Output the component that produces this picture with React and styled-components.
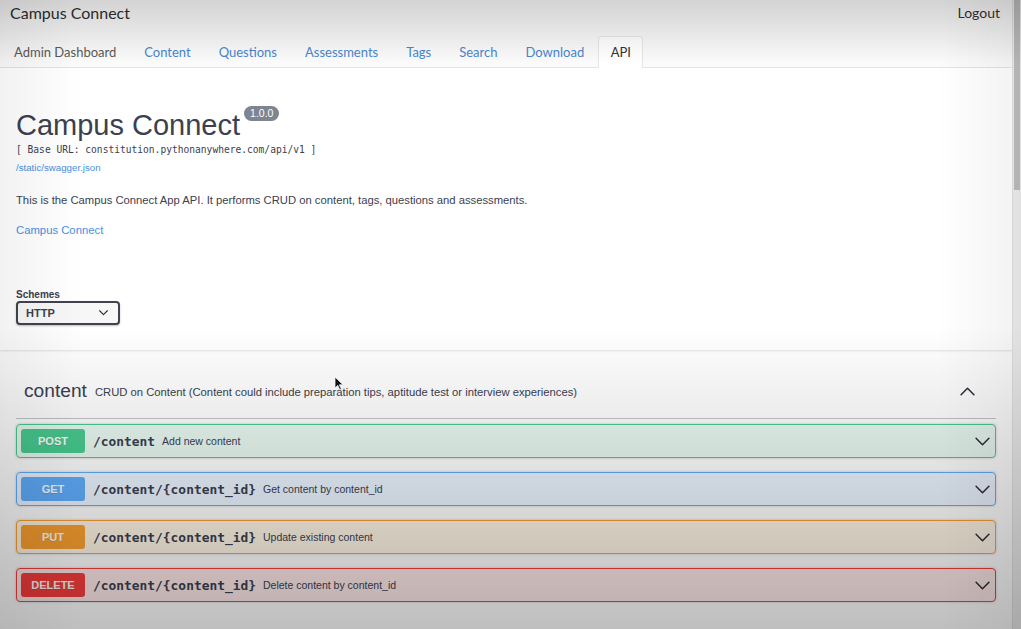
import React from 'react'
import styled, { createGlobalStyle } from 'styled-components'

const GlobalStyle = createGlobalStyle`
  html, body {
    margin: 0;
    padding: 0;
    overflow: hidden;
    background: #fff;
  }
  body {
    font-family: Lato, "Liberation Sans", Arial, sans-serif;
    color: #333;
  }
  * { box-sizing: border-box; }
`

const sans = `"Liberation Sans", Arial, Helvetica, sans-serif`
const mono = `"DejaVu Sans Mono", "Liberation Mono", monospace`

const METHODS = {
  POST: { color: '#49cc90', bg: 'rgba(73,204,144,.12)' },
  GET: { color: '#61affe', bg: 'rgba(97,175,254,.12)' },
  PUT: { color: '#fca130', bg: 'rgba(252,161,48,.12)' },
  DELETE: { color: '#f93e3e', bg: 'rgba(249,62,62,.12)' },
}

const Shell = styled.div`
  display: flex;
  width: 1021px;
  height: 629px;
  overflow: hidden;
`

const Main = styled.div`
  flex: 1;
  display: flex;
  flex-direction: column;
  min-width: 0;
`

const Navbar = styled.header`
  background: linear-gradient(to bottom, #f6f6f6 0, #fbfbfb 100%);
`

const TopRow = styled.div`
  display: flex;
  justify-content: space-between;
  align-items: center;
  height: 24px;
  padding: 0 10px;
`

const Brand = styled.span`
  font-size: 16px;
  color: #2f2f2f;
`

const Logout = styled.span`
  font-size: 14px;
  color: #333;
  padding-right: 2px;
`

const Tabs = styled.ul`
  display: flex;
  list-style: none;
  margin: 12px 0 0;
  padding: 0;
  border-bottom: 1px solid #e6e6e6;
`

const Tab = styled.li`
  height: 32px;
  line-height: 30px;
  padding: 0 13px;
  font-size: 13px;
  margin-bottom: -1px;
  color: ${p => (p.$active ? '#333' : p.$muted ? '#5a5a5a' : '#4a86cf')};
  background: ${p => (p.$active ? '#fff' : 'transparent')};
  border: 1px solid ${p => (p.$active ? '#e6e6e6' : 'transparent')};
  border-bottom-color: ${p => (p.$active ? '#fff' : 'transparent')};
  border-radius: 4px 4px 0 0;
  ${p => p.$active && 'padding: 0 11.5px;'}
`

const Info = styled.section`
  padding: 40px 16px 25px;
  box-shadow: 0 1px 2px rgba(0, 0, 0, 0.12);
  font-family: ${sans};
  color: #3b4151;
`

const TitleRow = styled.div`
  display: flex;
  align-items: flex-start;
  gap: 4px;
`

const Title = styled.h2`
  margin: 0;
  font-family: ${sans};
  font-weight: 400;
  font-size: 29px;
  line-height: 34px;
  color: #3b4151;
`

const Version = styled.span`
  margin-top: -2px;
  padding: 1px 6px;
  border-radius: 57px;
  background: #7d8492;
  color: #fff;
  font-size: 10.5px;
  line-height: 13px;
`

const BaseUrl = styled.div`
  margin-top: 1px;
  font-family: ${mono};
  font-size: 9.6px;
  line-height: 14px;
  color: #3b4151;
  white-space: pre;
`

const Link = styled.a`
  display: block;
  color: #4990e2;
  text-decoration: none;
  font-size: ${p => p.$size || 12}px;
  line-height: 14px;
  margin-top: ${p => p.$top || 0}px;
`

const Description = styled.p`
  margin: 17px 0 0;
  font-size: 11.25px;
  line-height: 16px;
  color: #3b4151;
`

const SchemesLabel = styled.div`
  margin-top: 52px;
  font-size: 10px;
  font-weight: 700;
  line-height: 12px;
  color: #3b4151;
`

const Select = styled.div`
  width: 104px;
  height: 24px;
  display: flex;
  align-items: center;
  justify-content: space-between;
  padding: 0 10px 0 8px;
  border: 2px solid #41444e;
  border-radius: 4px;
  background: #f7f7f7;
  box-shadow: 0 1px 2px rgba(0, 0, 0, 0.25);
  font-size: 11px;
  font-weight: 700;
  color: #3b4151;
`

const TagSection = styled.section`
  padding: 22px 16px 0;
  font-family: ${sans};
  color: #3b4151;
`

const TagHeader = styled.div`
  display: flex;
  align-items: center;
  height: 47px;
  padding: 0 21px 8px 8px;
  border-bottom: 1px solid rgba(59, 65, 81, 0.3);
`

const TagName = styled.span`
  font-size: 19.2px;
  line-height: 38px;
`

const TagDesc = styled.span`
  flex: 1;
  margin-left: 8px;
  font-size: 11.25px;
  margin-top: 1px;
`

const OpList = styled.div`
  display: flex;
  flex-direction: column;
  gap: 14px;
  margin-top: 5px;
`

const Opblock = styled.div`
  display: flex;
  align-items: center;
  height: 34px;
  padding: 4px 5px 4px 4px;
  border: 1px solid ${p => p.$color};
  border-radius: 4px;
  background: ${p => p.$bg};
  box-shadow: 0 0 3px rgba(0, 0, 0, 0.19);
`

const Method = styled.span`
  width: 64px;
  height: 24px;
  display: flex;
  align-items: center;
  justify-content: center;
  border-radius: 3px;
  background: ${p => p.$color};
  color: #fff;
  font-size: 11px;
  font-weight: 700;
  text-shadow: 0 1px 0 rgba(0, 0, 0, 0.1);
`

const Path = styled.span`
  margin-left: 8px;
  font-family: ${mono};
  font-weight: 700;
  font-size: 12.9px;
  color: #3b4151;
`

const Summary = styled.span`
  flex: 1;
  margin-left: 7px;
  font-size: 10.5px;
  color: #3b4151;
`

const Scrollbar = styled.div`
  width: 9px;
  flex-shrink: 0;
  display: flex;
  flex-direction: column;
  background: #eeeeee;
  border-left: 1px solid #e2e2e2;
`

const Thumb = styled.div`
  height: 190px;
  margin: 0 1px;
  background: #bdbdbd;
`

const Vignette = styled.div`
  position: fixed;
  inset: 0;
  pointer-events: none;
  background:
    linear-gradient(to bottom, rgba(0, 0, 0, 0.14) 0, rgba(0, 0, 0, 0) 10%, rgba(0, 0, 0, 0) 52%, rgba(0, 0, 0, 0.25) 100%),
    linear-gradient(to right, rgba(0, 0, 0, 0.05) 0, rgba(0, 0, 0, 0) 8%, rgba(0, 0, 0, 0) 92%, rgba(0, 0, 0, 0.05) 100%);
`

const Cursor = styled.svg`
  position: fixed;
  left: 334px;
  top: 376px;
  pointer-events: none;
`

const Chevron = ({ up, size = 14, stroke = 1.6 }) => (
  <svg width={size} height={size * 0.6} viewBox="0 0 14 8" fill="none">
    <path
      d={up ? 'M1 7 L7 1 L13 7' : 'M1 1 L7 7 L13 1'}
      stroke="#2b2f38"
      strokeWidth={stroke}
      strokeLinecap="round"
      strokeLinejoin="round"
    />
  </svg>
)

const tabs = ['Content', 'Questions', 'Assessments', 'Tags', 'Search', 'Download']

const operations = [
  { method: 'POST', path: '/content', summary: 'Add new content' },
  { method: 'GET', path: '/content/{content_id}', summary: 'Get content by content_id' },
  { method: 'PUT', path: '/content/{content_id}', summary: 'Update existing content' },
  { method: 'DELETE', path: '/content/{content_id}', summary: 'Delete content by content_id' },
]

const App = () => (
  <>
    <GlobalStyle />
    <Shell>
      <Main>
        <Navbar>
          <TopRow>
            <Brand>Campus Connect</Brand>
            <Logout>Logout</Logout>
          </TopRow>
          <Tabs>
            <Tab $muted>Admin Dashboard</Tab>
            {tabs.map(t => (
              <Tab key={t}>{t}</Tab>
            ))}
            <Tab $active>API</Tab>
          </Tabs>
        </Navbar>

        <Info>
          <TitleRow>
            <Title>Campus Connect</Title>
            <Version>1.0.0</Version>
          </TitleRow>
          <BaseUrl>[ Base URL: constitution.pythonanywhere.com/api/v1 ]</BaseUrl>
          <Link $size={9.7} $top={4}>/static/swagger.json</Link>
          <Description>
            This is the Campus Connect App API. It performs CRUD on content, tags, questions and assessments.
          </Description>
          <Link $size={11.3} $top={15}>Campus Connect</Link>
          <SchemesLabel>Schemes</SchemesLabel>
          <Select>
            <span>HTTP</span>
            <Chevron size={9} stroke={1.8} />
          </Select>
        </Info>

        <TagSection>
          <TagHeader>
            <TagName>content</TagName>
            <TagDesc>
              CRUD on Content (Content could include preparation tips, aptitude test or interview experiences)
            </TagDesc>
            <Chevron up size={15} stroke={1.4} />
          </TagHeader>
          <OpList>
            {operations.map(op => {
              const m = METHODS[op.method]
              return (
                <Opblock key={op.method} $color={m.color} $bg={m.bg}>
                  <Method $color={m.color}>{op.method}</Method>
                  <Path>{op.path}</Path>
                  <Summary>{op.summary}</Summary>
                  <Chevron size={15} stroke={1.4} />
                </Opblock>
              )
            })}
          </OpList>
        </TagSection>
      </Main>
      <Scrollbar>
        <Thumb />
      </Scrollbar>
    </Shell>
    <Cursor width="10" height="15" viewBox="0 0 10 15">
      <path d="M1 1 L1 12 L3.8 9.4 L5.8 13.8 L7.4 13.1 L5.4 8.8 L9 8.8 Z" fill="#111" stroke="#fff" strokeWidth="0.8" />
    </Cursor>
    <Vignette />
  </>
)

export default App
